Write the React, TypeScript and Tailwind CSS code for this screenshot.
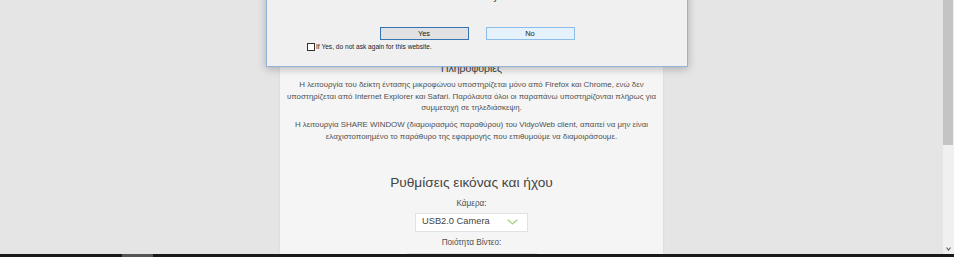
import React from "react";

const font = { fontFamily: '"Liberation Sans", Arial, sans-serif' };

function Chevron() {
  return (
    <svg width="11" height="6" viewBox="0 0 11 6" className="shrink-0">
      <path d="M0.7 0.7 L5.5 5 L10.3 0.7" fill="none" stroke="#a3d27c" strokeWidth="1.3" />
    </svg>
  );
}

export default function App() {
  return (
    <div
      className="relative w-[954px] h-[257px] overflow-hidden flex flex-col bg-[#e5e5e5]"
      style={font}
    >
      <div className="flex flex-1 min-h-0">
        {/* page content */}
        <div className="flex-1 flex justify-center min-w-0">
          <div className="w-[383px] bg-[#f5f5f5] shadow-[0_0_3px_rgba(0,0,0,0.06)] flex flex-col pt-[61px] text-[#505050]">
            <section className="px-[4px] pb-[24px] text-center">
              <h3 className="text-[10.5px] leading-[14px] text-[#444]">Πληροφορίες</h3>
              <p className="text-[7.9px] leading-[11.5px] mt-[4px] whitespace-nowrap">
                Η λειτουργία του δείκτη έντασης μικροφώνου υποστηρίζεται μόνο από Firefox και Chrome, ενώ δεν
                <br />
                υποστηρίζεται από Internet Explorer και Safari. Παρόλαυτα όλοι οι παραπάνω υποστηρίζονται πλήρως για
                <br />
                συμμετοχή σε τηλεδιάσκεψη.
              </p>
              <p className="text-[7.9px] leading-[11.5px] mt-[5.5px] whitespace-nowrap">
                Η λειτουργία SHARE WINDOW (διαμοιρασμός παραθύρου) του VidyoWeb client, απαιτεί να μην είναι
                <br />
                ελαχιστοποιημένο το παράθυρο της εφαρμογής που επιθυμούμε να διαμοιράσουμε.
              </p>
            </section>
            <div className="mx-[4px] h-px bg-[#dcdcdc]" />
            <section className="flex flex-col items-center pt-[8px]">
              <h2 className="text-[13.7px] leading-[18px] text-[#444]">Ρυθμίσεις εικόνας και ήχου</h2>
              <label className="text-[8.2px] leading-[11.5px] mt-[6px]">Κάμερα:</label>
              <div className="mt-[3px] w-[113px] h-[19px] bg-white border border-[#e2e2e2] flex items-center justify-between pl-[6px] pr-[9px]">
                <span className="text-[9.3px] text-[#444]">USB2.0 Camera</span>
                <Chevron />
              </div>
              <label className="text-[8.2px] leading-[11.5px] mt-[5.5px]">Ποιότητα Βίντεο:</label>
              <div className="mt-[4px] w-[130px] h-[19px] bg-white border border-[#e2e2e2]" />
            </section>
          </div>
        </div>
        {/* scrollbar */}
        <div className="w-[11px] bg-[#f0f0f0] flex flex-col">
          <div className="h-[145px] bg-[#c4c4c4] w-[10px]" />
          <div className="flex-1" />
          <div className="h-[10px] flex items-center justify-center">
            <svg width="5" height="4" viewBox="0 0 5 4">
              <path d="M0.5 0.5 L2.5 3 L4.5 0.5" fill="none" stroke="#606060" strokeWidth="1.2" />
            </svg>
          </div>
        </div>
      </div>
      {/* bottom strip */}
      <div className="h-[3px] bg-[#1a1a1a] flex">
        <div className="ml-[122px] w-[31px] bg-[#555]" />
      </div>

      {/* dialog overlay */}
      <div className="absolute left-[266px] top-[-30px] w-[422px] h-[97px] bg-[#f0f0f0] border border-[#92b4d8] shadow-[0_2px_8px_rgba(0,0,0,0.25)] flex flex-col">
        <div className="pt-[20px] h-[32px] flex justify-center">
          <span className="text-[9px] leading-[12px] text-[#222] pr-[4px]">Is that okay</span>
        </div>
        <div className="mt-[24px] flex justify-center gap-[17px]">
          <button className="w-[89px] h-[13px] bg-[#e1e1e1] border border-[#3673b2] text-[7.5px] leading-[11px] text-[#222]">
            Yes
          </button>
          <button className="w-[89px] h-[13px] bg-[#e5f1fb] border border-[#8dbde9] text-[7.5px] leading-[11px] text-[#222]">
            No
          </button>
        </div>
        <label className="mt-[2.5px] ml-[40px] flex items-center gap-[1px]">
          <span className="w-[8px] h-[8px] border border-[#333] bg-white" />
          <span className="text-[6.6px] leading-[8px] text-[#222]">If Yes, do not ask again for this website.</span>
        </label>
      </div>
    </div>
  );
}
